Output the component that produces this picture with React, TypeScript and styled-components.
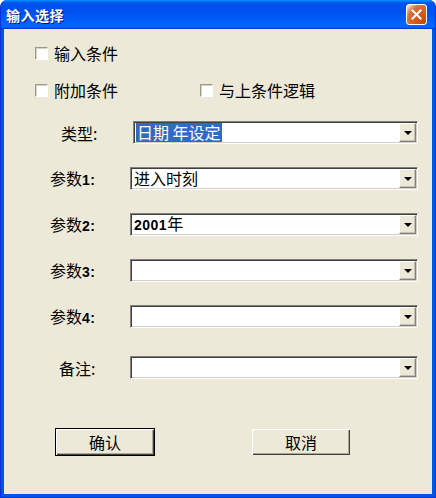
import { FC, ReactNode } from "react";
import styled, { createGlobalStyle } from "styled-components";

const GlobalStyle = createGlobalStyle`
  html, body {
    margin: 0;
    padding: 0;
    background: #ffffff;
  }
  body {
    font-family: "Noto Sans CJK SC", "Liberation Sans", sans-serif;
  }
`;

const cjk = `"Noto Sans CJK SC", "Liberation Sans", sans-serif`;

const Window = styled.div`
  width: 436px;
  height: 498px;
  box-sizing: border-box;
  display: flex;
  flex-direction: column;
  background: #0055e5;
  border: 1px solid #0831d9;
  border-top: none;
  border-radius: 7px 7px 0 0;
  overflow: hidden;
`;

const TitleBar = styled.div`
  height: 29px;
  flex: none;
  display: flex;
  align-items: center;
  justify-content: space-between;
  padding: 0 8px 0 5px;
  background: linear-gradient(
    to bottom,
    #0997ff 0%,
    #0053ee 10%,
    #0050ee 40%,
    #0066ff 86%,
    #0066ff 92%,
    #005bff 95%,
    #003dd7 97%,
    #003dd7 100%
  );
`;

const TitleText = styled.span`
  font-family: ${cjk};
  font-size: 14px;
  font-weight: bold;
  letter-spacing: 0.5px;
  color: #ffffff;
  text-shadow: 1px 1px #0f1089;
  line-height: 1;
`;

const CloseButton = styled.div`
  width: 21px;
  height: 21px;
  box-sizing: border-box;
  border: 1px solid #ffffff;
  border-radius: 3px;
  display: flex;
  align-items: center;
  justify-content: center;
  background: radial-gradient(
    circle at 90% 90%,
    #cc4600 0,
    #dc6527 55%,
    #cd7546 70%,
    #ffccb2 90%,
    #ffffff 100%
  );
`;

const Body = styled.div`
  flex: 1;
  margin: 0 3px 3px 3px;
  background: #ece9d8;
  display: flex;
  flex-direction: column;
`;

const CheckRow = styled.div<{ $top: number }>`
  margin-top: ${(p) => p.$top}px;
  padding-left: 31px;
  height: 16px;
  display: grid;
  grid-template-columns: 165px auto;
  align-items: center;
`;

const CheckItem = styled.label`
  display: flex;
  align-items: center;
  gap: 6px;
  font-family: ${cjk};
  font-size: 16px;
  line-height: 16px;
  color: #000000;
`;

const Box = styled.span`
  width: 13px;
  height: 13px;
  box-sizing: border-box;
  background: #ffffff;
  border: 1px solid;
  border-color: #9d9a8c #ffffff #ffffff #9d9a8c;
  box-shadow: inset 1px 1px #d8d4c4;
`;

const FieldRow = styled.div<{ $top: number; $left: number }>`
  margin-top: ${(p) => p.$top}px;
  display: grid;
  grid-template-columns: ${(p) => p.$left}px ${(p) => 414 - p.$left}px;
  align-items: center;
  height: 23px;
`;

const Label = styled.span<{ $indent: number }>`
  padding-left: ${(p) => p.$indent}px;
  font-family: ${cjk};
  font-size: 16px;
  line-height: 16px;
  color: #000000;
  white-space: nowrap;
`;

const Num = styled.b`
  font-family: "Liberation Sans", "DejaVu Sans", sans-serif;
  font-size: 14px;
  font-weight: bold;
  letter-spacing: 0.5px;
`;

const Combo = styled.div`
  height: 23px;
  box-sizing: border-box;
  display: flex;
  align-items: center;
  background: #ffffff;
  border: 1px solid;
  border-color: #808080 #ffffff #ffffff #808080;
  box-shadow: inset 1px 1px #404040, inset -1px -1px #d4d0c8;
  padding: 1px 1px 1px 2px;
`;

const ComboText = styled.span<{ $selected?: boolean }>`
  flex: 1;
  display: flex;
  align-items: center;
  font-family: ${cjk};
  font-size: 16px;
  line-height: 19px;
  color: #000000;
  & > em {
    font-style: normal;
    padding: 0 1px;
    background: ${(p) => (p.$selected ? "#316ac5" : "transparent")};
    color: ${(p) => (p.$selected ? "#ffffff" : "#000000")};
  }
`;

const DropButton = styled.span`
  width: 17px;
  height: 19px;
  flex: none;
  box-sizing: border-box;
  display: flex;
  align-items: center;
  justify-content: center;
  background: #ece9d8;
  border: 1px solid;
  border-color: #ffffff #808080 #808080 #ffffff;
  box-shadow: inset -1px -1px #c4c1b4;
  &::after {
    content: "";
    width: 0;
    height: 0;
    border-left: 4px solid transparent;
    border-right: 4px solid transparent;
    border-top: 4px solid #000000;
  }
`;

const ButtonRow = styled.div`
  margin-top: 49px;
  padding-left: 51px;
  display: flex;
  gap: 96px;
`;

const Button = styled.button<{ $default?: boolean }>`
  width: 100px;
  height: 28px;
  box-sizing: border-box;
  padding: 0;
  font-family: ${cjk};
  font-size: 16px;
  color: #000000;
  background: #ece9d8;
  border: 1px solid ${(p) => (p.$default ? "#000000" : "#ece9d8")};
  box-shadow: inset 1px 1px #ffffff, inset -1px -1px #404040,
    inset -2px -2px #aca899;
`;

interface IField {
  top: number;
  left: number;
  indent: number;
  label: ReactNode;
  value?: ReactNode;
  selected?: boolean;
}

const Field: FC<IField> = ({ top, left, indent, label, value, selected }) => (
  <FieldRow $top={top} $left={left}>
    <Label $indent={indent}>{label}</Label>
    <Combo>
      <ComboText $selected={selected}>{value && <em>{value}</em>}</ComboText>
      <DropButton />
    </Combo>
  </FieldRow>
);

const Check: FC<{ text: string }> = ({ text }) => (
  <CheckItem>
    <Box />
    {text}
  </CheckItem>
);

const App: FC = () => {
  return (
    <>
      <GlobalStyle />
      <Window>
        <TitleBar>
          <TitleText>输入选择</TitleText>
          <CloseButton>
            <svg width="11" height="11" viewBox="0 0 11 11">
              <path
                d="M1.5 1.5 L9.5 9.5 M9.5 1.5 L1.5 9.5"
                stroke="#ffffff"
                strokeWidth="2"
                strokeLinecap="square"
              />
            </svg>
          </CloseButton>
        </TitleBar>
        <Body>
          <CheckRow $top={16}>
            <Check text="输入条件" />
          </CheckRow>
          <CheckRow $top={21}>
            <Check text="附加条件" />
            <Check text="与上条件逻辑" />
          </CheckRow>
          <Field top={23} left={129} indent={57} label="类型:" value="日期 年设定" selected />
          <Field
            top={23}
            left={126}
            indent={46}
            label={<>参数<Num>1:</Num></>}
            value="进入时刻"
          />
          <Field
            top={23}
            left={126}
            indent={46}
            label={<>参数<Num>2:</Num></>}
            value={<><Num>2001</Num>年</>}
          />
          <Field top={23} left={126} indent={46} label={<>参数<Num>3:</Num></>} />
          <Field top={23} left={126} indent={46} label={<>参数<Num>4:</Num></>} />
          <Field top={28} left={126} indent={55} label="备注:" />
          <ButtonRow>
            <Button $default>确认</Button>
            <Button>取消</Button>
          </ButtonRow>
        </Body>
      </Window>
    </>
  );
};

export default App;
